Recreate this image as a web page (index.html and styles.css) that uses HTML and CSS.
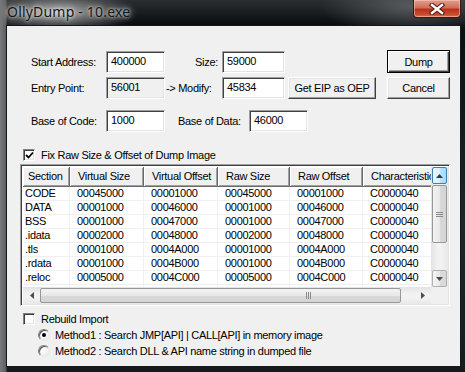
FILE: index.html
```html
<!DOCTYPE html>
<html lang="en">
<head>
  <meta charset="UTF-8" />
  <title>OllyDump - 10.exe</title>
  <link rel="stylesheet" href="styles.css">
</head>
<body>
  <div class="window">
    <div class="titlebar">
      <span class="title">OllyDump - 10.exe</span>
      <span class="close">
        <svg width="16" height="12" viewBox="0 0 16 12">
          <path d="M3 2 L13 10 M13 2 L3 10" stroke="#4a1a12" stroke-width="4.4" stroke-linecap="square"/>
          <path d="M3 2 L13 10 M13 2 L3 10" stroke="#ffffff" stroke-width="2.4" stroke-linecap="square"/>
        </svg>
      </span>
    </div>

    <div class="client">
      <!-- address fields -->
      <div class="row row-1">
        <span class="lbl lbl-first">Start Address:</span>
        <span class="edit">400000</span>
        <span class="lbl lbl-mid">Size:</span>
        <span class="edit edit-wide">59000</span>
        <span class="btn btn-default btn-side">Dump</span>
      </div>
      <div class="row row-2">
        <span class="lbl lbl-first">Entry Point:</span>
        <span class="edit edit-ro">56001</span>
        <span class="lbl lbl-mid lbl-arrow">-&gt; Modify:</span>
        <span class="edit edit-wide">45834</span>
        <span class="btn btn-eip">Get EIP as OEP</span>
        <span class="btn btn-cancel">Cancel</span>
      </div>
      <div class="row row-3">
        <span class="lbl lbl-first">Base of Code:</span>
        <span class="edit">1000</span>
        <span class="lbl lbl-data">Base of Data:</span>
        <span class="edit">46000</span>
      </div>

      <div class="check-row fix-row">
        <span class="checkbox checked">
          <svg width="9" height="9" viewBox="0 0 9 9"><path d="M1 4 L3.5 6.5 L8 1.5" fill="none" stroke="#000" stroke-width="1.8"/></svg>
        </span>
        <span class="check-text">Fix Raw Size &amp; Offset of Dump Image</span>
      </div>

      <!-- section list -->
      <div class="list">
        <div class="list-view">
          <div class="lv-row lv-head">
            <span class="c1">Section</span><span class="c2">Virtual Size</span><span class="c3">Virtual Offset</span><span class="c4">Raw Size</span><span class="c5">Raw Offset</span><span class="c6">Characteristics</span>
          </div>
          <div class="lv-row"><span class="c1">CODE</span><span class="c2">00045000</span><span class="c3">00001000</span><span class="c4">00045000</span><span class="c5">00001000</span><span class="c6">C0000040</span></div>
          <div class="lv-row"><span class="c1">DATA</span><span class="c2">00001000</span><span class="c3">00046000</span><span class="c4">00001000</span><span class="c5">00046000</span><span class="c6">C0000040</span></div>
          <div class="lv-row"><span class="c1">BSS</span><span class="c2">00001000</span><span class="c3">00047000</span><span class="c4">00001000</span><span class="c5">00047000</span><span class="c6">C0000040</span></div>
          <div class="lv-row"><span class="c1">.idata</span><span class="c2">00002000</span><span class="c3">00048000</span><span class="c4">00002000</span><span class="c5">00048000</span><span class="c6">C0000040</span></div>
          <div class="lv-row"><span class="c1">.tls</span><span class="c2">00001000</span><span class="c3">0004A000</span><span class="c4">00001000</span><span class="c5">0004A000</span><span class="c6">C0000040</span></div>
          <div class="lv-row"><span class="c1">.rdata</span><span class="c2">00001000</span><span class="c3">0004B000</span><span class="c4">00001000</span><span class="c5">0004B000</span><span class="c6">C0000040</span></div>
          <div class="lv-row"><span class="c1">.reloc</span><span class="c2">00005000</span><span class="c3">0004C000</span><span class="c4">00005000</span><span class="c5">0004C000</span><span class="c6">C0000040</span></div>
          <div class="lv-row"><span class="c1">.rsrc</span><span class="c2">00007000</span><span class="c3">00051000</span><span class="c4">00007000</span><span class="c5">00051000</span><span class="c6">C0000040</span></div>
        </div>

        <div class="vscroll">
          <span class="sb-btn sb-up hot">
            <svg width="7" height="4" viewBox="0 0 7 4"><path d="M0 4 L3.5 0 L7 4 Z" fill="#1e3f5c"/></svg>
          </span>
          <span class="sb-thumb-v">
            <svg width="7" height="7" viewBox="0 0 7 7"><path d="M0 1.5 H7 M0 3.5 H7 M0 5.5 H7" stroke="#8a8a8a" stroke-width="1"/></svg>
          </span>
          <span class="sb-track"></span>
          <span class="sb-btn sb-down">
            <svg width="7" height="4" viewBox="0 0 7 4"><path d="M0 0 L3.5 4 L7 0 Z" fill="#4d4d4d"/></svg>
          </span>
        </div>

        <div class="hscroll">
          <span class="sb-btn sb-left">
            <svg width="4" height="7" viewBox="0 0 4 7"><path d="M4 0 L0 3.5 L4 7 Z" fill="#4d4d4d"/></svg>
          </span>
          <span class="sb-thumb-h">
            <svg width="7" height="7" viewBox="0 0 7 7"><path d="M1.5 0 V7 M3.5 0 V7 M5.5 0 V7" stroke="#8a8a8a" stroke-width="1"/></svg>
          </span>
          <span class="sb-track"></span>
          <span class="sb-btn sb-right">
            <svg width="4" height="7" viewBox="0 0 4 7"><path d="M0 0 L4 3.5 L0 7 Z" fill="#4d4d4d"/></svg>
          </span>
        </div>

        <div class="sb-corner"></div>
      </div>

      <!-- import options -->
      <div class="check-row rebuild-row">
        <span class="checkbox"></span>
        <span class="check-text rebuild-text">Rebuild Import</span>
      </div>
      <div class="radio-row">
        <span class="radio on"></span>
        <span class="radio-text">Method1 : Search JMP[API] | CALL[API] in memory image</span>
      </div>
      <div class="radio-row">
        <span class="radio"></span>
        <span class="radio-text">Method2 : Search DLL &amp; API name string in dumped file</span>
      </div>
    </div>
  </div>
</body>
</html>
```

FILE: styles.css
```css
:root {
  --face: #f0f0f0;
  --shadow: #a0a0a0;
  --dark: #696969;
  --ui-font: 'Liberation Sans', Arial, sans-serif;
}

html, body {
  margin: 0;
  padding: 0;
}

body {
  width: 465px;
  height: 372px;
  overflow: hidden;
  font-family: var(--ui-font);
  font-size: 11px;
  letter-spacing: -0.3px;
  color: #000;
}

.window {
  width: 465px;
  height: 372px;
  display: flex;
  flex-direction: column;
  background:
    radial-gradient(ellipse 80px 22px at 58px 12px, rgba(190, 190, 190, 0.9), rgba(120, 120, 120, 0.45) 65%, transparent 100%),
    radial-gradient(ellipse 90px 30px at 410px 6px, rgba(110, 112, 115, 0.7), transparent 100%),
    linear-gradient(to right, #77797c 0, #5b5e61 6px, transparent 7px),
    linear-gradient(to bottom, #2a2e31 0, #0b0e11 24px, #202528 60%, #151a1c 100%);
}

/* title bar */
.titlebar {
  height: 25px;
  display: flex;
  align-items: flex-start;
  justify-content: space-between;
  flex: none;
}

.title {
  margin: 2px 0 0 7px;
  font-family: 'Noto Sans', 'Open Sans', sans-serif;
  font-size: 14px;
  letter-spacing: 0.2px;
  color: #141414;
  text-shadow: 0 0 6px rgba(255, 255, 255, 0.9), 0 0 3px rgba(255, 255, 255, 0.8);
}

.close {
  width: 46px;
  height: 17px;
  margin-right: 4px;
  border: 1px solid #3c1610;
  border-top: none;
  border-radius: 0 0 4px 4px;
  display: flex;
  align-items: center;
  justify-content: center;
  background: linear-gradient(to bottom, #e2a08f 0, #cf6f58 45%, #b8311c 55%, #c84d2f 85%, #e07450 100%);
  box-shadow: inset 0 0 0 1px rgba(255, 210, 200, 0.5);
}

/* client area */
.client {
  width: 453px;
  height: 340px;
  margin-left: 6px;
  background: var(--face);
  border: 1px solid #15181a;
  display: flex;
  flex-direction: column;
}

.row {
  display: flex;
  align-items: center;
  margin-left: 24px;
}

.row-1 { margin-top: 24px; height: 23px; }
.row-2 { margin-top: 4px; height: 22px; }
.row-3 { margin-top: 11px; height: 22px; }

.lbl {
  white-space: nowrap;
  flex: none;
}

.lbl-first { width: 75px; }

.lbl-mid {
  width: 53px;
  padding-right: 4px;
  text-align: right;
}

.lbl-arrow {
  width: 56px;
  padding: 0 0 0 1px;
  text-align: left;
}

.lbl-data {
  width: 71px;
  margin-left: 13px;
}

.edit {
  box-sizing: border-box;
  width: 59px;
  height: 22px;
  padding: 3px 0 0 4px;
  line-height: 13px;
  background: #fff;
  border: 1px solid;
  border-color: #a0a0a0 #fff #fff #a0a0a0;
  box-shadow: inset 1px 1px 0 #404040, inset -1px -1px 0 #e3e3e3;
  flex: none;
}

.edit-wide { width: 63px; }
.edit-ro { background: var(--face); }

.btn {
  box-sizing: border-box;
  height: 22px;
  display: flex;
  align-items: center;
  justify-content: center;
  background: var(--face);
  border: 1px solid;
  border-color: #fff #404040 #404040 #fff;
  box-shadow: inset -1px -1px 0 var(--shadow), inset 1px 1px 0 #e3e3e3;
  flex: none;
}

.btn-default {
  border: 1px solid #000;
  box-shadow: inset 1px 1px 0 #fff, inset -1px -1px 0 #404040, inset -2px -2px 0 var(--shadow);
}

.btn-side {
  width: 63px;
  height: 23px;
  margin-left: 102px;
}

.btn-eip {
  width: 88px;
  margin-left: 3px;
}

.btn-cancel {
  width: 63px;
  margin-left: 11px;
}

/* checkboxes */
.check-row {
  display: flex;
  align-items: center;
  height: 16px;
  margin-left: 16px;
}

.fix-row { margin-top: 15px; }
.rebuild-row { margin-top: 5px; }

.checkbox {
  box-sizing: border-box;
  width: 12px;
  height: 12px;
  background: #fff;
  border: 1px solid;
  border-color: #808080 #fff #fff #808080;
  box-shadow: inset 1px 1px 0 #404040, inset -1px -1px 0 #e3e3e3;
  display: flex;
  align-items: center;
  justify-content: center;
  flex: none;
}

.check-text { margin-left: 6px; }
.rebuild-text { margin-left: 6px; }

.radio-row {
  display: flex;
  align-items: center;
  height: 16px;
  margin-left: 31px;
}

.radio {
  box-sizing: border-box;
  width: 12px;
  height: 12px;
  border-radius: 50%;
  background: radial-gradient(circle at 40% 40%, #fff 0, #f4f4f4 50%, #dedede 100%);
  border: 1px solid;
  border-color: #808080 #e8e8e8 #e8e8e8 #808080;
  box-shadow: inset 1px 1px 0 #5a5a5a;
  position: relative;
  flex: none;
}

.radio.on::after {
  content: "";
  position: absolute;
  left: 3px;
  top: 3px;
  width: 4px;
  height: 4px;
  border-radius: 50%;
  background: #000;
}

.radio-text { margin-left: 5px; }

/* list view */
.list {
  box-sizing: border-box;
  width: 430px;
  height: 142px;
  margin: 1px 0 0 13px;
  background: #fff;
  border: 1px solid;
  border-color: #a0a0a0 #fff #fff #a0a0a0;
  box-shadow: inset 1px 1px 0 #404040, inset -1px -1px 0 #e3e3e3;
  padding: 2px 1px 1px 2px;
  display: grid;
  grid-template-columns: 1fr 17px;
  grid-template-rows: 1fr 17px;
}

.list-view {
  overflow: hidden;
  min-width: 0;
}

.lv-row {
  display: flex;
  height: 14px;
  white-space: nowrap;
}

.lv-row span {
  box-sizing: border-box;
  flex: none;
  height: 14px;
  line-height: 13px;
  padding-left: 7px;
  border-right: 1px solid #f0f0f0;
  border-bottom: 1px solid #f0f0f0;
  overflow: hidden;
}

.lv-row .c1 { width: 47px; padding-left: 2px; }
.lv-row .c2 { width: 74px; }
.lv-row .c3 { width: 74px; }
.lv-row .c4 { width: 72px; }
.lv-row .c5 { width: 73px; }
.lv-row .c6 { width: 80px; }

.lv-head {
  height: 20px;
}

.lv-head span {
  height: 20px;
  line-height: 19px;
  padding-left: 8px;
  background: var(--face);
  border-right: 1px solid #696969;
  border-bottom: 1px solid #696969;
  box-shadow: inset 1px 1px 0 #fff, inset -1px -1px 0 var(--shadow);
}

.lv-head .c1 { padding-left: 5px; }

/* scrollbars */
.vscroll, .hscroll {
  display: flex;
  background: linear-gradient(to right, #e3e3e3, #f2f2f2 40%, #f2f2f2 60%, #e8e8e8);
}

.vscroll { flex-direction: column; }

.hscroll {
  background: linear-gradient(to bottom, #e3e3e3, #f2f2f2 40%, #f2f2f2 60%, #e8e8e8);
}

.sb-btn {
  box-sizing: border-box;
  width: 17px;
  height: 17px;
  display: flex;
  align-items: center;
  justify-content: center;
  flex: none;
}

.vscroll .sb-btn {
  margin: 0 1px;
  width: 15px;
}

.sb-up.hot {
  border: 1px solid #3c7fb1;
  border-radius: 2px;
  background: linear-gradient(to right, #eaf6fd, #d9f0fc 50%, #bee6fd 51%, #a7d9f5);
}

.sb-down {
  border: 1px solid #b0b0b0;
  border-radius: 2px;
  background: linear-gradient(to right, #f6f6f6, #e8e8e8 50%, #dcdcdc 51%, #d8d8d8);
}

.sb-track { flex: 1; }

.sb-thumb-v {
  box-sizing: border-box;
  height: 58px;
  margin: 1px 1px 0;
  border: 1px solid #979797;
  border-radius: 2px;
  background: linear-gradient(to right, #f3f3f3, #e8e8e8 50%, #d9d9d9 51%, #d4d4d4);
  display: flex;
  align-items: center;
  justify-content: center;
}

.sb-thumb-h {
  box-sizing: border-box;
  width: 361px;
  margin: 1px 0;
  border: 1px solid #979797;
  border-radius: 2px;
  background: linear-gradient(to bottom, #f3f3f3, #e8e8e8 50%, #d9d9d9 51%, #d4d4d4);
  display: flex;
  align-items: center;
  justify-content: center;
  flex: none;
}

.sb-thumb-h svg { margin-left: 176px; }

.sb-corner { background: var(--face); }
```
